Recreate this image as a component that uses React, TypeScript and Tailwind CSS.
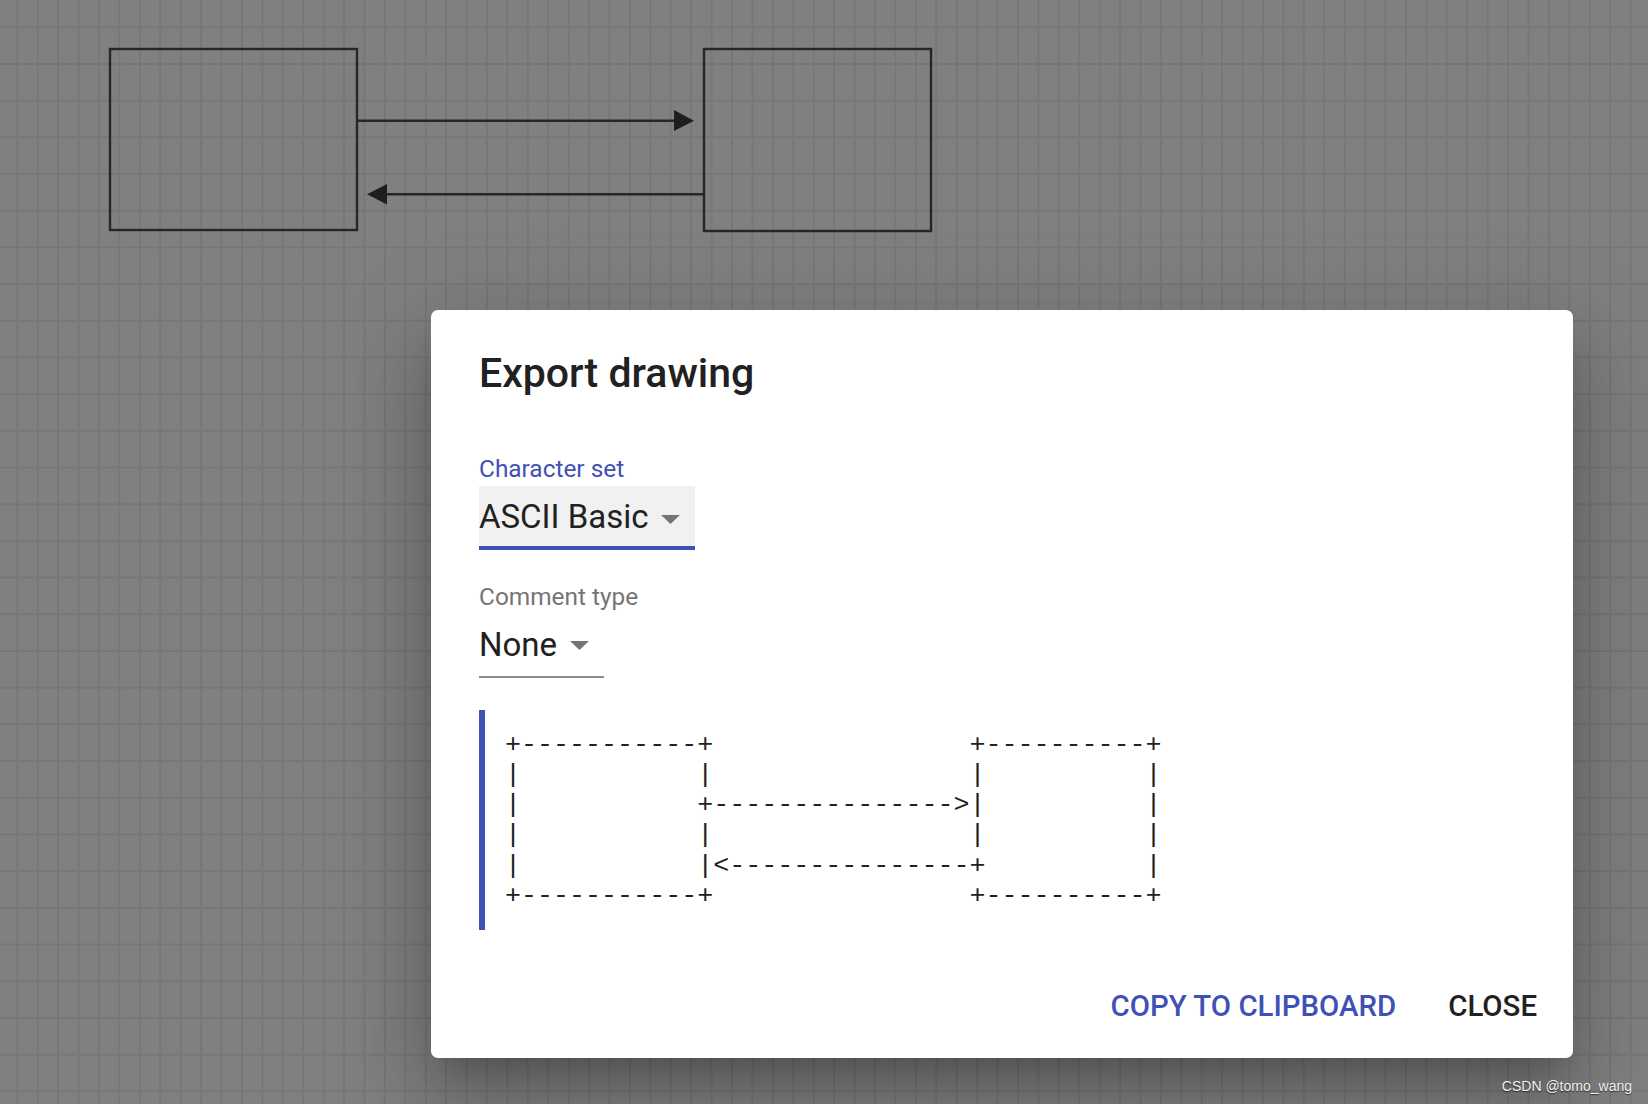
const asciiRows = [
  "+-----------+                +----------+",
  "|           |                |          |",
  "|           +--------------->|          |",
  "|           |                |          |",
  "|           |<---------------+          |",
  "+-----------+                +----------+",
];

function Canvas() {
  // shapes drawn on the editor canvas behind the dialog
  return (
    <svg className="absolute left-0 top-0" width="1648" height="300" viewBox="0 0 1648 300">
      <g stroke="#272727" strokeWidth="2.4" fill="none">
        <rect x="110" y="49" width="247" height="181" />
        <rect x="704" y="49" width="227" height="182" />
        <line x1="357" y1="120.7" x2="676" y2="120.7" />
        <line x1="704" y1="194.3" x2="385" y2="194.3" />
      </g>
      <g fill="#1e1e1e">
        <polygon points="674,110 694,120.7 674,131" />
        <polygon points="387,184 367,194.3 387,204.5" />
      </g>
    </svg>
  );
}

function Triangle() {
  return (
    <svg width="19" height="9" viewBox="0 0 19 9" className="shrink-0">
      <polygon points="0,0 19,0 9.5,9" fill="#757575" />
    </svg>
  );
}

function ExportDialog() {
  return (
    <div className="absolute left-[431px] top-[310px] flex h-[748px] w-[1142px] flex-col rounded-[7px] bg-white pl-[48px] pt-[39px] shadow-[0_23px_31px_-14px_rgba(0,0,0,0.2),0_50px_80px_6px_rgba(0,0,0,0.14),0_19px_97px_17px_rgba(0,0,0,0.12)]">
      <h2 className="text-[41px] font-medium leading-[48px] text-[#212121]">Export drawing</h2>

      <div className="mt-[58px] text-[24.4px] leading-[28px] text-[#3f51b5]">Character set</div>
      <div className="mt-[3px] flex h-[64px] w-[216px] items-start border-b-4 border-[#3f51b5] bg-[#f1f1f1] pt-[11px] pr-[15px]">
        <span className="text-[33px] leading-[40px] text-[#212121]">ASCII Basic</span>
        <span className="ml-auto mt-[18px]"><Triangle /></span>
      </div>

      <div className="mt-[33px] text-[24.4px] leading-[28px] text-[#757575]">Comment type</div>
      <div className="mt-[3px] flex h-[64px] w-[125px] items-start border-b-2 border-[#8c8c8c] pt-[11px] pr-[15px]">
        <span className="text-[33px] leading-[40px] text-[#212121]">None</span>
        <span className="ml-auto mt-[16px]"><Triangle /></span>
      </div>

      <pre className="mt-[32px] w-fit border-l-[6px] border-[#3f51b5] pb-[19px] pl-[20px] pr-[20px] pt-[20px] font-['Liberation_Mono',monospace] text-[26.7px] leading-[30.14px] text-[#212121]">
        {asciiRows.join("\n")}
      </pre>

      <div className="mt-auto flex justify-end gap-[52px] pb-[34px] pr-[36px] text-[29.4px] font-medium leading-[36px]">
        <button className="text-[#3f51b5]">COPY TO CLIPBOARD</button>
        <button className="text-[#212121]">CLOSE</button>
      </div>
    </div>
  );
}

export default function App() {
  return (
    <div className="relative h-[1104px] w-[1648px] overflow-hidden bg-[#808080] bg-[linear-gradient(to_right,#777777_0,#777777_2px,transparent_2px),linear-gradient(to_bottom,#777777_0,#777777_2px,transparent_2px)] bg-[size:20.43px_36.7px] bg-[position:16.3px_26.3px] font-['Roboto',sans-serif]">
      <Canvas />
      <ExportDialog />
      <div className="absolute bottom-[10px] right-[16px] font-['Liberation_Sans',sans-serif] text-[14px] leading-[16px] text-[#f2f2f2] [text-shadow:0_1px_1px_rgba(0,0,0,0.6)]">
        CSDN @tomo_wang
      </div>
    </div>
  );
}
